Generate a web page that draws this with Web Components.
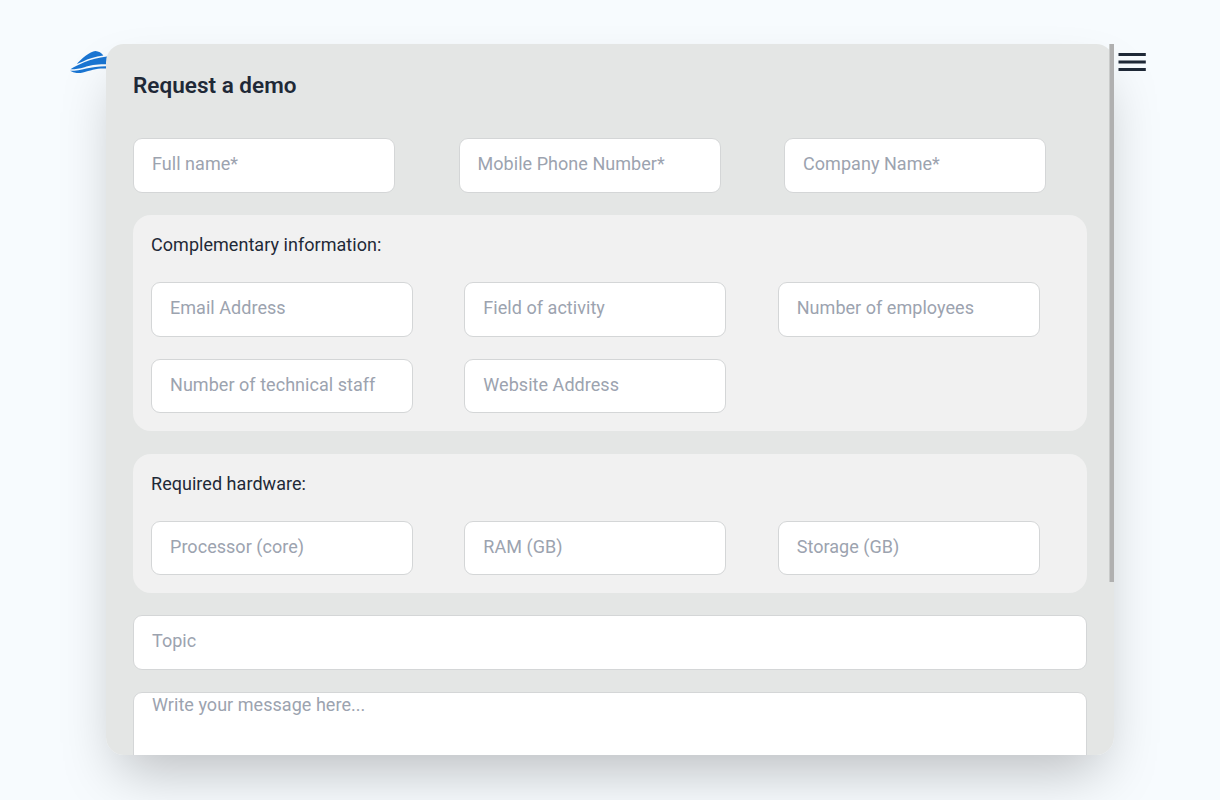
<!DOCTYPE html>
<html lang="en">
<head>
<meta charset="utf-8">
<title>Request a demo</title>
<style>
html,body{margin:0;height:100%;overflow:hidden}
body{background:#f7fbfe;color:#1f2937;font-family:Roboto,"Noto Sans",sans-serif;font-size:18px}
</style>
</head>
<body>
<site-header></site-header>
<demo-dialog>
  <span slot="title">Request a demo</span>
  <field-grid><form-field>Full name*</form-field><form-field>Mobile Phone Number*</form-field><form-field>Company Name*</form-field></field-grid>
  <field-group><span slot="label">Complementary information:</span>
    <field-grid><form-field>Email Address</form-field><form-field>Field of activity</form-field><form-field>Number of employees</form-field><form-field>Number of technical staff</form-field><form-field>Website Address</form-field></field-grid>
  </field-group>
  <field-group><span slot="label">Required hardware:</span>
    <field-grid><form-field>Processor (core)</form-field><form-field>RAM (GB)</form-field><form-field>Storage (GB)</form-field></field-grid>
  </field-group>
  <form-field wide>Topic</form-field>
  <form-field wide multiline>Write your message here...</form-field>
</demo-dialog>
<script>
const define = (name, html) => customElements.define(name, class extends HTMLElement {
  constructor() {
    super();
    const t = document.createElement('template');
    t.innerHTML = html;
    this.attachShadow({mode: 'open'}).append(t.content.cloneNode(true));
  }
});
define('site-header', `<style>
:host{display:flex;justify-content:space-between;align-items:center;height:36px;padding:44px 73px 0 70px}
svg{display:block}.logo{margin-bottom:4px}</style>
<svg class="logo" width="37" height="26" viewBox="0 0 37 26" fill="#1a75d2">
<path d="M6.8 17C11 12.2 20 4.2 25.4 4C28.6 4 31.6 6.2 33.4 8.4C25 9.4 18 11.8 13 14.4Q10 15.8 6.8 17Z"/>
<path d="M.4 22.2C8 18 22 10 42 9.2V17.6C29 16.6 21 18.2 14.5 20.2C9 21.8 4.5 22.3 .4 22.2Z"/>
<path d="M0 23.8C12 24 22 18 42 19.4V22C28 20.4 22 23 13 25.6Q6 27.2 0 23.8Z"/></svg>
<svg width="30" height="20" viewBox="0 0 30 20" fill="#1f2937"><path d="M1.5 1h27.3v3H1.5zM1.5 8.5h27.3v3H1.5zM1.5 16h27.3v3H1.5z"/></svg>`);
define('demo-dialog', `<style>
:host{position:absolute;left:106px;top:44px;width:1008px;height:711px;border-radius:18px;box-shadow:0 28px 56px -13.5px rgba(0,0,0,.25)}
.panel{box-sizing:border-box;height:100%;overflow:hidden;border-radius:inherit;background:#e4e6e5;padding:27px 27px 0;display:flex;flex-direction:column;gap:22.2px}
h1{margin:0 0 17.25px;font-size:22.5px;line-height:28px;font-weight:600;height:28px;flex:none;letter-spacing:.02px}
i{position:absolute;right:0;top:0;width:4px;height:538px;background:#b0b0b0;border-left:1px solid #c9cbca}</style>
<div class="panel"><h1><slot name="title"></slot></h1><slot></slot></div><i></i>`);
define('field-grid', `<style>:host{display:grid;grid-template-columns:repeat(3,1fr);gap:22.2px var(--column-gap,22.6px);flex:none}</style><slot></slot>`);
define('field-group', `<style>
:host{--column-gap:22.1px;display:flex;flex-direction:column;gap:22.2px;background:#f1f1f1;border-radius:18px;padding:18px;flex:none}
div{line-height:23px;padding-bottom:3.9px;letter-spacing:.04px}</style><div><slot name="label"></slot></div><slot></slot>`);
define('form-field', `<style>
:host{display:block;box-sizing:border-box;width:262px;height:54.5px;flex:none;background:#fff;border:1px solid #d4d6d7;border-radius:9px;padding:11px 18px;color:#9ca3af;line-height:27px;letter-spacing:.04px;white-space:nowrap}
:host([wide]){width:100%}
:host([multiline]){height:144px;padding-top:0;line-height:23px}</style><slot></slot>`);
</script>
</body>
</html>
